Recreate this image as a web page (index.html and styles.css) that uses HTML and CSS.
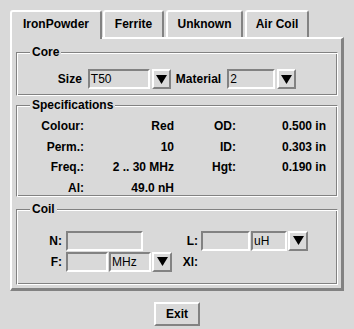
FILE: index.html
```html
<!DOCTYPE html>
<html>
<head>
<meta charset="utf-8">
<title>Coil</title>
<link rel="stylesheet" href="styles.css">
</head>
<body>
<div class="app">
  <div class="tabs">
    <div class="tab tab-iron selected">IronPowder</div>
    <div class="tab tab-ferrite">Ferrite</div>
    <div class="tab tab-unknown">Unknown</div>
    <div class="tab tab-air">Air Coil</div>
  </div>
  <div class="panel">
    <fieldset class="group core">
      <legend>Core</legend>
      <div class="core-row">
        <span class="lbl">Size</span>
        <span class="entry e-size">T50</span>
        <span class="arrow"><svg width="11" height="9" viewBox="0 0 11 9"><polygon points="0,0 11,0 5.5,9" fill="#000"/></svg></span>
        <span class="lbl">Material</span>
        <span class="entry e-mat">2</span>
        <span class="arrow last"><svg width="11" height="9" viewBox="0 0 11 9"><polygon points="0,0 11,0 5.5,9" fill="#000"/></svg></span>
      </div>
    </fieldset>
    <fieldset class="group specs">
      <legend>Specifications</legend>
      <div class="spec">
        <span>Colour:</span><span>Red</span><span>OD:</span><span>0.500 in</span>
        <span>Perm.:</span><span>10</span><span>ID:</span><span>0.303 in</span>
        <span>Freq.:</span><span>2 .. 30 MHz</span><span>Hgt:</span><span>0.190 in</span>
        <span>Al:</span><span>49.0 nH</span><span></span><span></span>
      </div>
    </fieldset>
    <fieldset class="group coilbox">
      <legend>Coil</legend>
      <div class="coil">
        <span class="clbl">N:</span>
        <div class="fields"><span class="entry e-n"></span></div>
        <span class="clbl r">L:</span>
        <div class="fields">
          <span class="entry e-l"></span>
          <span class="entry e-uh">uH</span>
          <span class="arrow wide"><svg width="11" height="9" viewBox="0 0 11 9"><polygon points="0,0 11,0 5.5,9" fill="#000"/></svg></span>
        </div>
        <span class="clbl">F:</span>
        <div class="fields">
          <span class="entry e-f"></span>
          <span class="entry e-mhz">MHz</span>
          <span class="arrow wide"><svg width="11" height="9" viewBox="0 0 11 9"><polygon points="0,0 11,0 5.5,9" fill="#000"/></svg></span>
        </div>
        <span class="clbl r">Xl:</span>
        <div class="fields"></div>
      </div>
    </fieldset>
  </div>
  <div class="exit-row">
    <div class="btn">Exit</div>
  </div>
</div>
</body>
</html>
```

FILE: styles.css
```css
html, body {
  margin: 0;
  padding: 0;
}
body {
  background: #d9d9d9;
  font-family: "Liberation Sans", Arial, sans-serif;
  font-size: 12px;
  color: #000;
  width: 354px;
  height: 329px;
  overflow: hidden;
}
.app {
  padding: 10px 10px 0 10px;
}

/* tabs */
.tabs {
  display: flex;
  align-items: flex-end;
  height: 27px;
}
.tab {
  box-sizing: border-box;
  height: 27px;
  border-style: solid;
  border-width: 2px 2px 0 2px;
  border-color: #fff #828282 transparent #fff;
  border-radius: 3px 3px 0 0;
  font-weight: bold;
  text-align: center;
  line-height: 25px;
  white-space: nowrap;
}
.tab.selected {
  height: 29px;
  margin-bottom: -2px;
  position: relative;
  z-index: 1;
  background: #d9d9d9;
}
.tab-iron { width: 92px; }
.tab-ferrite { width: 61px; margin-left: 1px; }
.tab-unknown { width: 77px; margin-left: 2px; }
.tab-air { width: 64px; margin-left: 2px; }

/* notebook panel */
.panel {
  box-sizing: border-box;
  width: 334px;
  border-style: solid;
  border-width: 2px 3px 3px 2px;
  border-color: #fff #828282 #828282 #fff;
  padding: 7px 3px 3px 4px;
}

/* group boxes */
.group {
  margin: 0;
  padding: 0;
  min-width: 0;
  border: 1px solid;
  border-color: #828282 #fff #fff #828282;
  box-shadow: inset 1px 1px 0 #fff, inset -1px -1px 0 #828282;
}
.group legend {
  margin-left: 13px;
  padding: 0 2px;
  font-weight: bold;
  line-height: 13px;
  background: #d9d9d9;
}
.specs { margin-top: 3px; }
.coilbox { margin-top: 6px; }

/* core */
.core-row {
  display: flex;
  justify-content: center;
  align-items: center;
  padding: 10px 0 6px;
}
.lbl {
  font-weight: bold;
  margin-right: 6px;
}
.core-row .arrow {
  margin-left: 2px;
  margin-right: 5px;
}
.core-row .arrow.last { margin-right: 0; }

/* entries and arrow buttons */
.entry {
  box-sizing: border-box;
  display: block;
  height: 20px;
  border: 2px solid;
  border-color: #828282 #fff #fff #828282;
  padding-left: 1px;
  line-height: 16px;
  overflow: hidden;
  white-space: nowrap;
}
.e-size { width: 62px; }
.e-mat { width: 48px; }
.e-n { width: 77px; }
.e-f { width: 42px; }
.e-mhz { width: 42px; }
.e-l { width: 49px; }
.e-uh { width: 36px; }

.arrow {
  box-sizing: border-box;
  width: 19px;
  height: 20px;
  border: 2px solid;
  border-color: #fff #828282 #828282 #fff;
  display: flex;
  align-items: center;
  justify-content: center;
}
.arrow.wide { width: 20px; }
.arrow svg { display: block; }

/* specifications */
.spec {
  display: grid;
  grid-template-columns: 67px 90px 62px 90px;
  grid-auto-rows: 14px;
  row-gap: 6.67px;
  padding: 7px 0 1px;
  font-weight: bold;
  line-height: 14px;
}
.spec span {
  text-align: right;
  white-space: nowrap;
}

/* coil */
.coil {
  display: grid;
  grid-template-columns: 49px 108px 27px 1fr;
  grid-template-rows: 20px 20px;
  row-gap: 1px;
  padding: 15px 0 12px;
}
.clbl {
  font-weight: bold;
  text-align: right;
  padding-right: 4px;
  line-height: 20px;
}
.clbl.r { padding-right: 3px; }
.fields {
  display: flex;
  gap: 1px;
}

/* exit */
.exit-row {
  display: flex;
  justify-content: center;
  padding-top: 11px;
}
.btn {
  box-sizing: border-box;
  width: 46px;
  height: 24px;
  border: 2px solid;
  border-color: #fff #828282 #828282 #fff;
  font-weight: bold;
  text-align: center;
  line-height: 20px;
}
```
